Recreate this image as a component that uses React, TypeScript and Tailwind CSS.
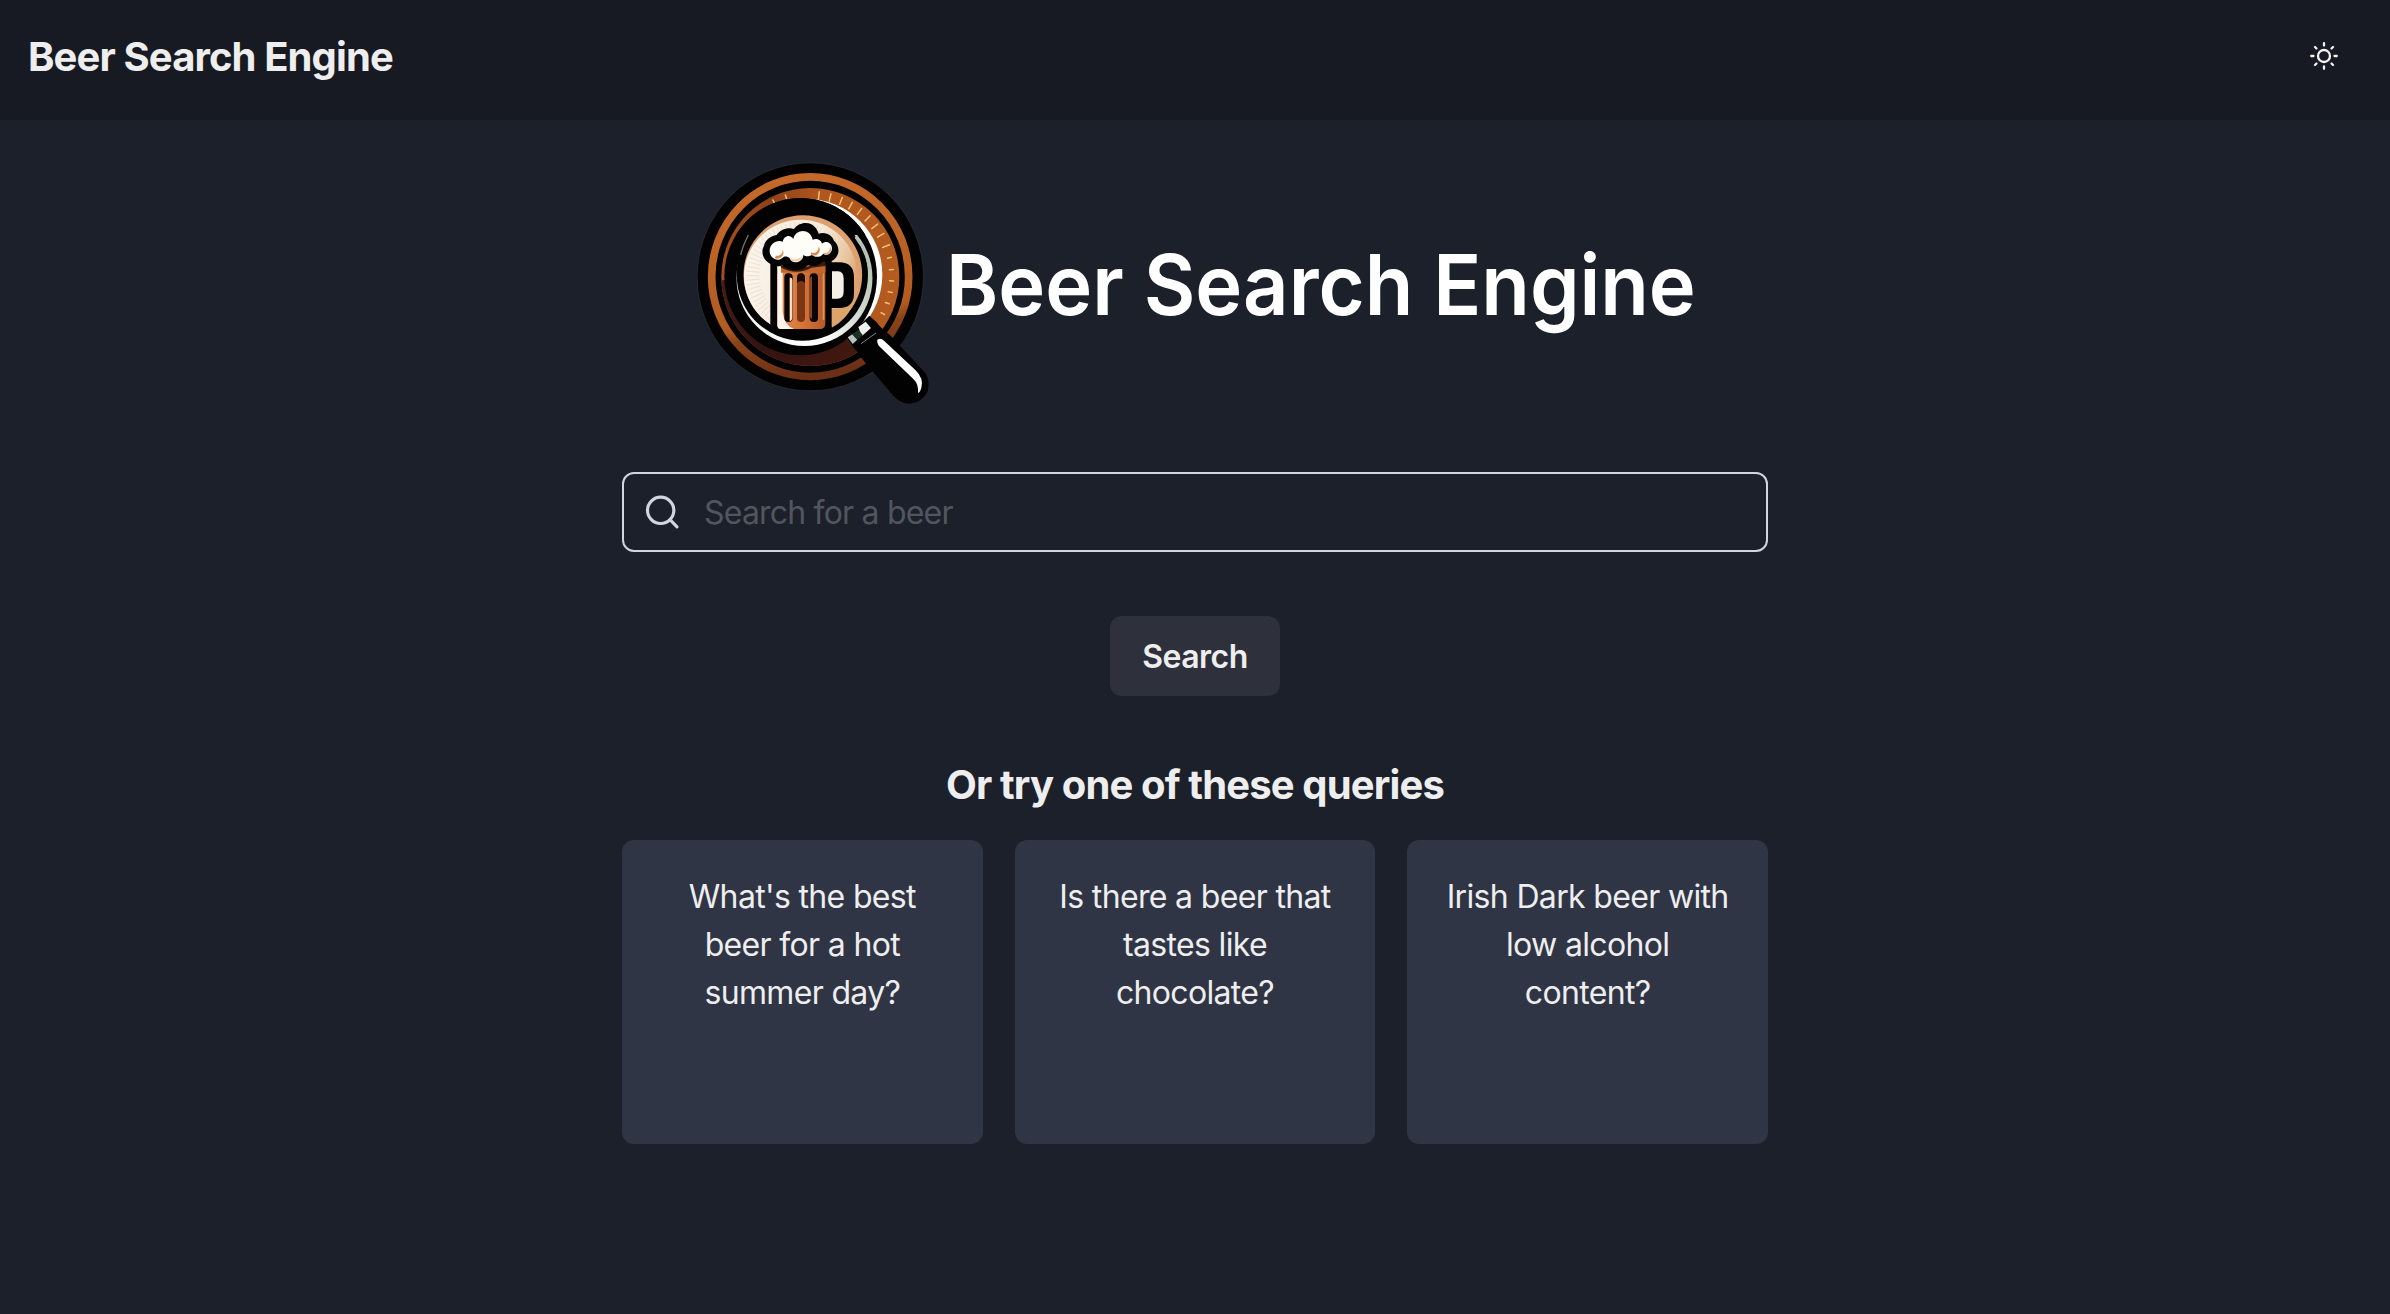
import React from "react";

const queries = [
  "What's the best beer for a hot summer day?",
  "Is there a beer that tastes like chocolate?",
  "Irish Dark beer with low alcohol content?",
];

const tickAngles = [-116, -107, -84, -76, -68, -60.5, -53, -45.5, -38, -30.5, -22, -13.5, -5, 3, 11, 19, 27];

function Ticks() {
  return (
    <g stroke="#f0c274" strokeWidth="4.5" strokeLinecap="round">
      {tickAngles.map((a, i) => {
        const c = Math.cos((a * Math.PI) / 180);
        const s = Math.sin((a * Math.PI) / 180);
        const r0 = i > 10 ? 238 : 234;
        const r1 = i > 10 ? 250 : 256;
        return <line key={a} x1={391 + r0 * c} y1={395 + r0 * s} x2={391 + r1 * c} y2={395 + r1 * s} />;
      })}
    </g>
  );
}

function Rays() {
  return (
    <g stroke="#e6cdb4" strokeWidth="1.8" opacity="0.8">
      {Array.from({ length: 72 }, (_, i) => {
        const a = (i * 5 * Math.PI) / 180;
        return (
          <line
            key={i}
            x1={358 + 120 * Math.cos(a)}
            y1={392 + 120 * Math.sin(a)}
            x2={358 + 160 * Math.cos(a)}
            y2={392 + 160 * Math.sin(a)}
          />
        );
      })}
    </g>
  );
}

function Logo() {
  return (
    <svg viewBox="30 30 750 750" className="h-[250px] w-[250px] shrink-0" role="img" aria-label="Beer logo">
      <defs>
        <linearGradient id="ring" x1="0.35" y1="0" x2="0.5" y2="1">
          <stop offset="0" stopColor="#c4692a" />
          <stop offset="0.7" stopColor="#b35c20" />
          <stop offset="0.78" stopColor="#8a4319" />
          <stop offset="1" stopColor="#6b2f15" />
        </linearGradient>
        <linearGradient id="disc" x1="0" y1="0.4" x2="1" y2="0.3">
          <stop offset="0" stopColor="#a84f1d" />
          <stop offset="0.3" stopColor="#8e4218" />
          <stop offset="0.6" stopColor="#b0561e" />
          <stop offset="1" stopColor="#b45b20" />
        </linearGradient>
        <linearGradient id="shade" x1="0" y1="0" x2="1" y2="0.5">
          <stop offset="0" stopColor="#4a1d16" />
          <stop offset="0.5" stopColor="#331312" />
          <stop offset="1" stopColor="#45190f" />
        </linearGradient>
        <linearGradient id="rim" x1="0" y1="0.6" x2="1" y2="0.4">
          <stop offset="0" stopColor="#f4f4f0" />
          <stop offset="0.55" stopColor="#ffffff" />
          <stop offset="1" stopColor="#b9c4b8" />
        </linearGradient>
        <linearGradient id="lens" x1="0" y1="0.3" x2="1" y2="0.6">
          <stop offset="0" stopColor="#fbf6ee" />
          <stop offset="0.6" stopColor="#f5e9da" />
          <stop offset="0.85" stopColor="#e9c49c" />
          <stop offset="1" stopColor="#d99a62" />
        </linearGradient>
        <linearGradient id="ale" x1="0" y1="0" x2="1" y2="0">
          <stop offset="0" stopColor="#e08a50" />
          <stop offset="0.55" stopColor="#d57438" />
          <stop offset="1" stopColor="#b2582a" />
        </linearGradient>
        <clipPath id="discClip">
          <circle cx="391" cy="396" r="267" />
        </clipPath>
        <clipPath id="frameClip">
          <ellipse cx="362" cy="395" rx="229" ry="236" />
        </clipPath>
      </defs>

      {/* coaster */}
      <ellipse cx="391" cy="395.5" rx="339.5" ry="342" fill="#020202" stroke="#3b3f46" strokeWidth="1.5" />
      <ellipse cx="390.5" cy="395" rx="295.5" ry="299.5" fill="none" stroke="url(#ring)" strokeWidth="23" />
      <circle cx="391" cy="396" r="267" fill="url(#disc)" />
      <g clipPath="url(#discClip)">
        <path d="M100 410 L170 400 L560 540 L640 560 V700 H100 Z" fill="url(#shade)" />
      </g>
      <Ticks />

      {/* magnifier frame and lens */}
      <circle cx="379" cy="389" r="228" fill="#ffffff" />
      <ellipse cx="362" cy="395" rx="229" ry="236" fill="#020202" />
      <circle cx="373.5" cy="399" r="204" fill="url(#rim)" />
      <circle cx="367" cy="390" r="197" fill="#020202" />
      <path clipPath="url(#frameClip)" d="M120 150 H620 V270 H120 Z" fill="#020202" />
      <path d="M205 270 C195 290 186 310 182 330" fill="none" stroke="#6d736e" strokeWidth="4" />
      <path d="M528 278 C548 303 562 335 568 370" fill="none" stroke="#b4c0b4" strokeWidth="7" strokeLinecap="round" />
      <circle cx="368.5" cy="389" r="178" fill="#dda070" />
      <circle cx="362" cy="394" r="170" fill="url(#lens)" />
      <Rays />
      <path d="M448 492 L500 488 C515 470 526 440 530 405 C536 460 510 520 455 548 Z" fill="#dca468" />

      {/* mug */}
      <path d="M454 352 H482 Q522 354 522 398 V444 Q522 489 478 489 H450 V352 Z" fill="#040303" />
      <path d="M456 379 H474 Q491 380 491 400 V440 Q491 461 472 461 H456 Z" fill="#f4f0e6" />
      <path d="M271 345 H455 V551 L430 566 Q368 576 300 566 L271 548 Z" fill="#040303" />
      <path d="M292 360 H436 V536 Q436 551 420 552 H304 Q292 552 292 540 Z" fill="url(#ale)" />
      <path d="M292 362 H308 V500 Q312 540 342 552 H302 Q292 552 292 540 Z" fill="#fbf4ea" />
      <path d="M303 362 H436 V383 H303 Z" fill="#c5682f" />
      <path d="M300 360 Q350 372 380 366 L436 348 V363 L395 368 Q350 392 304 368 Z" fill="#3d1a0c" />
      <rect x="313" y="385" width="25" height="146" rx="12" fill="#0a0504" />
      <path d="M329 398 Q337 396 337 406 V516 Q337 527 329 529 Z" fill="#f5dcc0" />
      <rect x="351" y="385" width="24" height="146" rx="12" fill="#7c3616" />
      <path d="M351 414 V400 Q351 385 363 385 Q375 385 375 400 V414 Q363 402 351 414 Z" fill="#1a0a06" />
      <rect x="389" y="385" width="25" height="146" rx="12" fill="#0a0504" />
      <path d="M389 402 Q390 396 396 394 V522 Q390 520 389 512 Z" fill="#8c421c" />
      <rect x="428" y="385" width="5" height="140" rx="2" fill="#e29458" />

      {/* foam */}
      <path
        d="M278 360 C252 350 240 325 252 302 C256 285 272 272 290 270 C300 254 324 246 342 252 C356 230 392 226 408 250 C412 256 415 262 416 266 C436 260 456 270 462 287 C478 300 480 326 466 340 C456 352 440 354 430 348 C418 364 396 366 384 360 C364 384 322 378 306 360 C298 366 286 364 278 360 Z"
        fill="#040303"
      />
      <path
        d="M284 342 C266 334 264 308 278 296 C286 288 300 286 308 290 C312 274 328 266 340 282 C346 252 390 248 398 284 C412 278 424 286 426 296 C438 284 456 294 456 310 C456 326 440 334 430 326 C422 338 406 338 396 330 C384 336 376 334 370 330 C370 352 336 362 328 338 C318 332 312 334 308 338 C302 344 292 346 284 342 Z"
        fill="#fffdf8"
      />
      <path d="M288 332 C300 334 308 326 308 314 C316 328 302 346 284 340 Z" fill="#d98b52" />
      <path d="M392 322 C404 328 416 320 416 304 C426 318 412 338 394 330 Z" fill="#d98b52" />
      <path d="M330 336 C336 346 356 346 366 332 C366 350 338 358 330 338 Z" fill="#f0cda8" />
      <path d="M428 322 C438 328 450 320 450 304 C460 318 446 334 432 328 Z" fill="#e7b48a" />

      {/* magnifier handle */}
      <path d="M500 578 L568 512 L590 532 Q600 548 630 570 L736 684 Q752 712 742 742 Q722 776 686 776 Q660 774 640 752 L545 640 Q536 622 524 612 Z" fill="#020202" />
      <path d="M535 546 L557 530 L573 549 L545 574 Z" fill="#eef0ec" />
      <path d="M503 577 L517 568 L532 584 L518 597 Z" fill="#b9c4bd" />
      <path d="M517 568 L535 554 L549 571 L532 584 Z" fill="#1c3128" />
      <path d="M543 596 L588 564" stroke="#7f8582" strokeWidth="3" fill="none" />
      <path d="M592 584 Q602 578 612 587 L706 675 Q732 700 724 728 Q720 742 714 744 Q716 716 700 702 L600 606 Q590 596 592 584 Z" fill="#ffffff" />
    </svg>
  );
}

function SunIcon() {
  return (
    <svg viewBox="-16 -16 32 32" className="h-8 w-8" fill="none" stroke="#f0f0f0" strokeWidth="2.3" strokeLinecap="round">
      <circle r="6" />
      <path d="M0 -12.8V-10.5M0 10.5V12.8M-12.8 0H-10.5M10.5 0H12.8M-9 -9L-7.5 -7.5M9 -9L7.5 -7.5M-9 9L-7.5 7.5M9 9L7.5 7.5" />
    </svg>
  );
}

function SearchIcon() {
  return (
    <svg viewBox="0 0 24 24" className="h-10 w-10 shrink-0" fill="none" stroke="#cdd6e1" strokeWidth="1.9" strokeLinecap="round">
      <circle cx="11.2" cy="11" r="7.9" />
      <path d="M21 20.9L16.8 16.6" />
    </svg>
  );
}

export default function App() {
  return (
    <div className="flex h-[1314px] flex-col bg-[#1c202a] font-[Inter,sans-serif] text-[#eeeeee]">
      <header className="flex h-[120px] shrink-0 items-start justify-between bg-[#171a22] pt-[33px] pr-[50px] pl-7">
        <h1 className="text-[40px] leading-[48px] font-bold tracking-[-0.88px]">Beer Search Engine</h1>
        <button className="mt-[7px]" aria-label="Toggle theme">
          <SunIcon />
        </button>
      </header>

      <main className="mx-auto flex w-[1146px] flex-col items-center pt-[35px]">
        <div className="flex h-[250px] w-[1010px] items-center gap-[6px]">
          <Logo />
          <div className="w-[754px] origin-left scale-x-[0.945] pt-[10px] text-[84px] leading-none font-semibold whitespace-nowrap text-white">
            Beer Search Engine
          </div>
        </div>

        <label className="mt-[67px] flex h-20 w-full items-center gap-[22px] rounded-xl border-2 border-[#cdd6e1] pl-[18px]">
          <SearchIcon />
          <input
            className="h-full flex-1 bg-transparent text-[32px] tracking-[-0.8px] outline-none placeholder:text-[#52555e]"
            placeholder="Search for a beer"
          />
        </label>

        <button className="mt-16 h-20 w-[170px] rounded-xl bg-[#2e313b] pt-[2px] text-[32px] font-semibold tracking-[-0.5px]">
          Search
        </button>

        <h2 className="mt-[65px] text-[40px] leading-[48px] font-bold tracking-[-0.86px]">Or try one of these queries</h2>

        <div className="mt-[31px] grid w-full grid-cols-3 gap-8">
          {queries.map((q) => (
            <button
              key={q}
              className="flex h-[304px] items-start justify-center rounded-xl bg-[#2f3545] px-8 pt-[33px] text-center text-[32px] leading-[48px] tracking-[-0.66px]"
            >
              {q}
            </button>
          ))}
        </div>
      </main>
    </div>
  );
}
